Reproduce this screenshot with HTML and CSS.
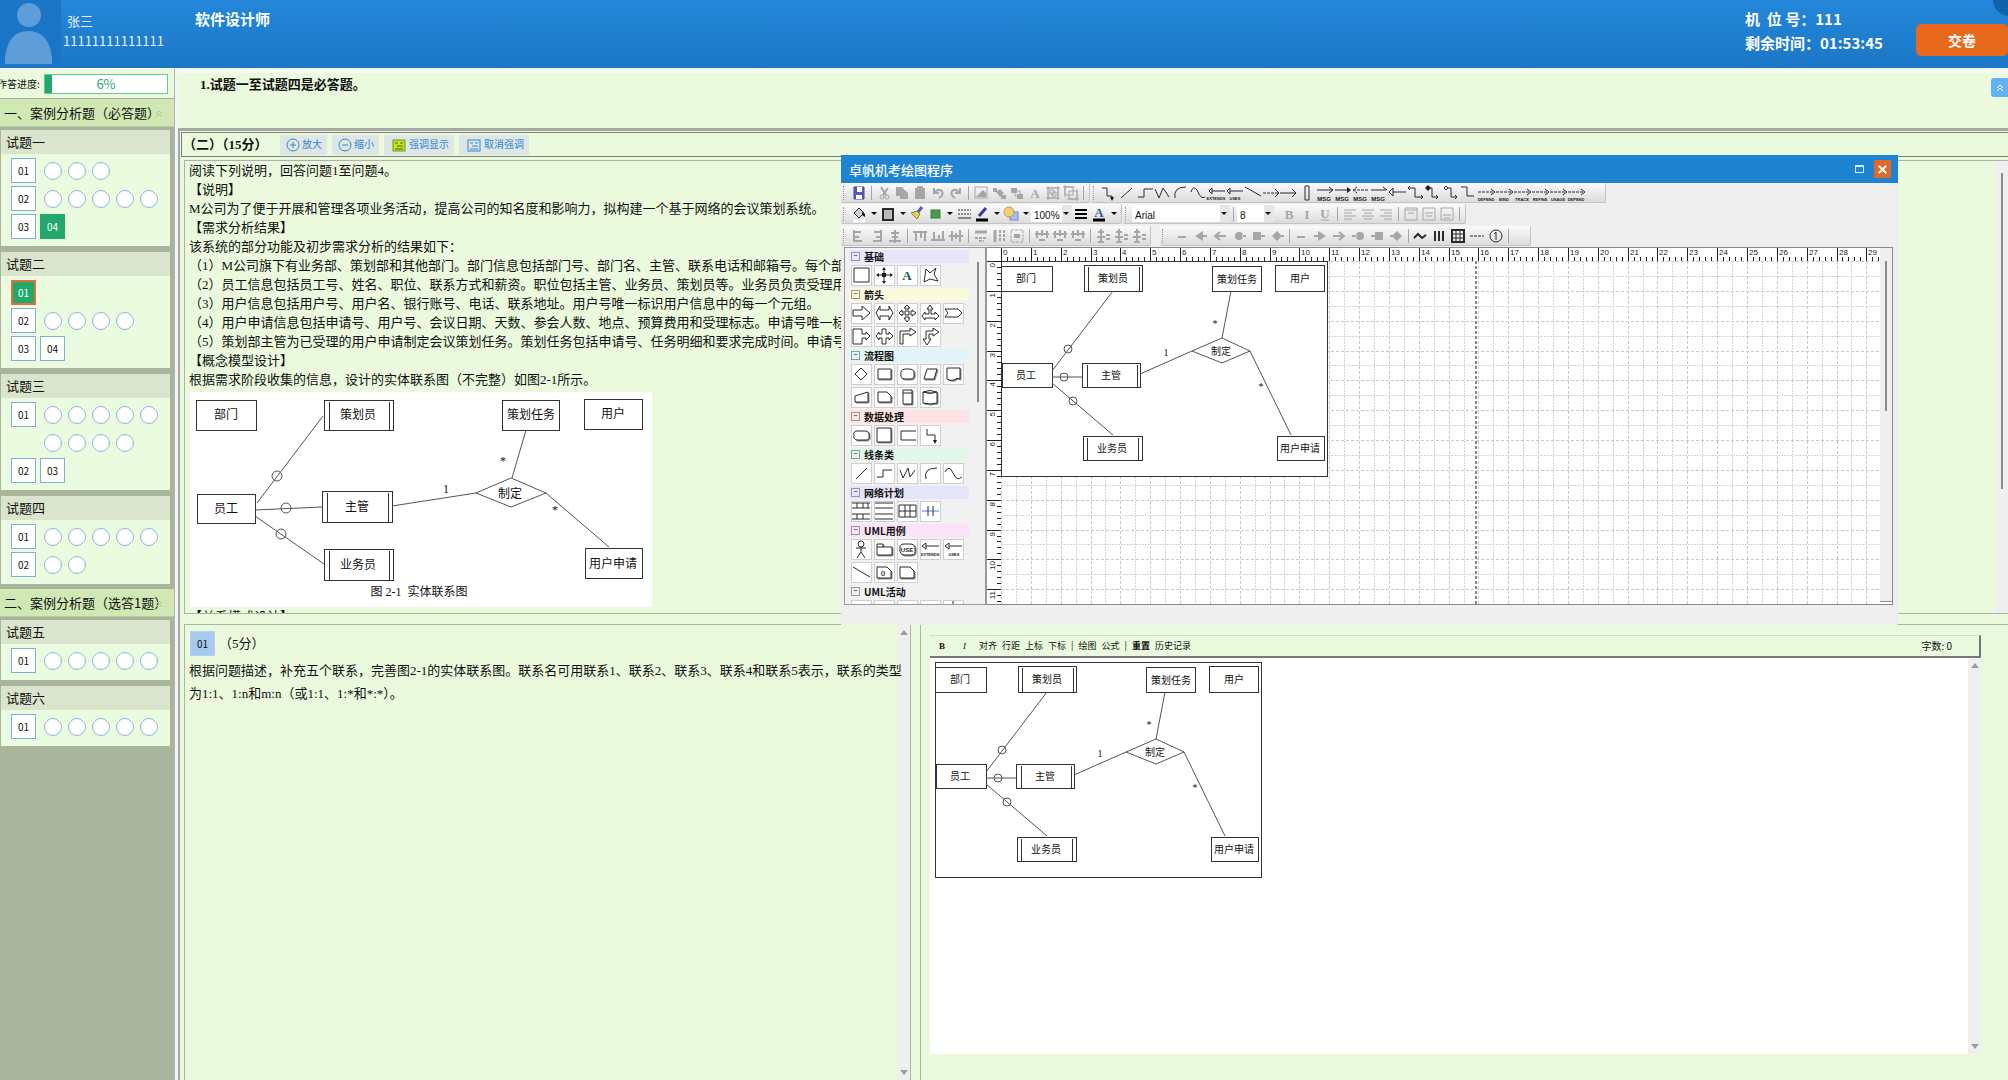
FILE: index.html
```html
<!DOCTYPE html>
<html lang="zh-CN">
<head>
<meta charset="utf-8">
<title>软件设计师</title>
<link rel="stylesheet" href="styles.css">
</head>
<body>
<header class="top">
  <svg class="avatar" viewBox="0 0 61 68" aria-hidden="true"><circle cx="29" cy="15" r="12"/><path d="M5 64V58Q8 31 28 31Q49 31 52 58V64Z"/></svg>
  <div class="who"><span>张三</span><span>11111111111111</span></div>
  <h1 class="exam">软件设计师</h1>
  <dl class="seat">
    <div><dt>机&nbsp; 位 号：</dt><dd>111</dd></div>
    <div><dt>剩余时间：</dt><dd>01:53:45</dd></div>
  </dl>
  <button class="submit" type="button">交卷</button>
  <span class="corner"></span>
</header>

<div class="shell">
<aside class="side">
  <div class="progress"><span class="progress-label">作答进度:</span><div class="bar"><i style="width:6%"></i><b>6%</b></div></div>
  <h2 class="part">一、案例分析题（必答题）<svg viewBox="0 0 8 8"><path d="M1 4L4 1L7 4M1 7L4 4L7 7"/></svg></h2>
  <section class="group"><h3>试题一</h3><div class="rows">
    <div class="row"><button>01</button><i class="first"></i><i></i><i></i></div>
    <div class="row"><button>02</button><i class="first"></i><i></i><i></i><i></i><i></i></div>
    <div class="row"><button>03</button><button class="done">04</button></div>
  </div></section>
  <section class="group"><h3>试题二</h3><div class="rows">
    <div class="row"><button class="done now">01</button></div>
    <div class="row"><button>02</button><i class="first"></i><i></i><i></i><i></i></div>
    <div class="row"><button>03</button><button>04</button></div>
  </div></section>
  <section class="group"><h3>试题三</h3><div class="rows">
    <div class="row"><button>01</button><i class="first"></i><i></i><i></i><i></i><i></i></div>
    <div class="row more"><i class="first"></i><i></i><i></i><i></i></div>
    <div class="row"><button>02</button><button>03</button></div>
  </div></section>
  <section class="group"><h3>试题四</h3><div class="rows">
    <div class="row"><button>01</button><i class="first"></i><i></i><i></i><i></i><i></i></div>
    <div class="row"><button>02</button><i class="first"></i><i></i></div>
  </div></section>
  <h2 class="part">二、案例分析题（选答1题）<svg viewBox="0 0 8 8"><path d="M1 4L4 1L7 4M1 7L4 4L7 7"/></svg></h2>
  <section class="group"><h3>试题五</h3><div class="rows">
    <div class="row"><button>01</button><i class="first"></i><i></i><i></i><i></i><i></i></div>
  </div></section>
  <section class="group"><h3>试题六</h3><div class="rows">
    <div class="row"><button>01</button><i class="first"></i><i></i><i></i><i></i><i></i></div>
  </div></section>
</aside>

<main class="work">
  <div class="notice"><p>1.试题一至试题四是必答题。</p>
    <button class="fold" type="button" aria-label="收起"><svg viewBox="0 0 8 8"><path d="M1 4L4 1L7 4M1 7L4 4L7 7"/></svg></button>
  </div>
  <div class="frame">
    <div class="qbar">
      <h2>（二）（15分）</h2>
      <button type="button"><svg viewBox="0 0 14 14"><circle cx="7" cy="7" r="6"/><path d="M4 7H10M7 4V10"/></svg>放大</button>
      <button type="button"><svg viewBox="0 0 14 14"><circle cx="7" cy="7" r="6"/><path d="M4 7H10"/></svg>缩小</button>
      <button type="button" class="wide"><svg viewBox="0 0 14 14"><rect x="1" y="2" width="12" height="11" fill="#c6e421" stroke="#6a9a1c"/><path d="M3 5H6M8 5H11M5 8H11M3 11H11" stroke="#3d6b1c"/></svg>强调显示</button>
      <button type="button" class="wide"><svg viewBox="0 0 14 14"><rect x="1" y="2" width="12" height="11"/><path d="M3 5H6M8 5H11M5 8H11M3 11H11"/></svg>取消强调</button>
    </div>
    <article class="statement">
      <div class="reading">
        <p>阅读下列说明，回答问题1至问题4。</p>
        <p>【说明】</p>
        <p>M公司为了便于开展和管理各项业务活动，提高公司的知名度和影响力，拟构建一个基于网络的会议策划系统。</p>
        <p>【需求分析结果】</p>
        <p>该系统的部分功能及初步需求分析的结果如下：</p>
        <p>（1）M公司旗下有业务部、策划部和其他部门。部门信息包括部门号、部门名、主管、联系电话和邮箱号。每个部门只</p>
        <p>（2）员工信息包括员工号、姓名、职位、联系方式和薪资。职位包括主管、业务员、策划员等。业务员负责受理用户</p>
        <p>（3）用户信息包括用户号、用户名、银行账号、电话、联系地址。用户号唯一标识用户信息中的每一个元组。</p>
        <p>（4）用户申请信息包括申请号、用户号、会议日期、天数、参会人数、地点、预算费用和受理标志。申请号唯一标识</p>
        <p>（5）策划部主管为已受理的用户申请制定会议策划任务。策划任务包括申请号、任务明细和要求完成时间。申请号唯</p>
        <p>【概念模型设计】</p>
        <p>根据需求阶段收集的信息，设计的实体联系图（不完整）如图2-1所示。</p>
        <svg class="er big" viewBox="0 0 462 215" width="462" height="215" role="img" aria-label="实体联系图">
          <g class="ink">
            <path d="M6 8H66V38H6ZM134 8H203V38H134ZM139 10V38M199 10V38M312 8H369V38H312ZM394 7H452V37H394ZM7 102H65V131H7ZM132 99H202V130H132ZM137 101V130M198 101V130M134 157H203V188H134ZM139 159V188M199 159V188M395 156H452V186H395Z"/>
            <path class="slant" d="M286 101L321 86L356 101L321 115ZM67 111L133 24M65 118L132 115M65 124L134 172M202 114L286 101M336 38L322 86M356 101L419 155"/>
            <circle cx="87" cy="84" r="5"/><circle cx="96" cy="116" r="5"/><circle cx="91" cy="142" r="5"/>
          </g>
          <text x="36" y="27">部门</text><text x="168" y="27">策划员</text><text x="341" y="27">策划任务</text><text x="423" y="26">用户</text>
          <text x="36" y="121">员工</text><text x="167" y="119">主管</text><text x="320" y="106">制定</text>
          <text x="168" y="177">业务员</text><text x="423" y="176">用户申请</text>
          <text x="256" y="101">1</text><text x="313" y="73">*</text><text x="365" y="122">*</text>
          <text x="229" y="204">图 2-1&nbsp; 实体联系图</text>
        </svg>
        <p>【关系模式设计】</p>
      </div>
      <div class="thinbar"><i></i></div>
    </article>
    <div class="answer">
      <section class="ask">
        <header><b>01</b><span>（5分）</span></header>
        <p>根据问题描述，补充五个联系，完善图2-1的实体联系图。联系名可用联系1、联系2、联系3、联系4和联系5表示，联系的类型</p><p>为1:1、1:n和m:n（或1:1、1:*和*:*）。</p>
        <div class="sb"><i class="up"></i><i class="down"></i></div>
      </section>
      <section class="reply">
        <div class="tools">
          <button type="button" class="t-b">B</button><button type="button" class="t-i">I</button>
          <button type="button">对齐</button><button type="button">行距</button><button type="button">上标</button><button type="button">下标</button><span>|</span>
          <button type="button">绘图</button><button type="button">公式</button><span>|</span>
          <button type="button" class="strong">重置</button><button type="button">历史记录</button>
          <output>字数: 0</output>
        </div>
        <div class="editor">
          <svg class="er small" viewBox="0 0 327 216" width="327" height="216" role="img" aria-label="作答图">
            <g class="ink">
              <path d="M0 0H326V215H0ZM0 5H51V30H0ZM83 4H141V30H83ZM87 6V30M138 6V30M211 5H260V30H211ZM274 4H323V30H274ZM1 102H51V126H1ZM81 102H139V126H81ZM86 104V126M136 104V126M82 175H141V199H82ZM86 177V199M137 177V199M276 175H323V199H276Z"/>
              <path class="slant" d="M191 90L221 77L249 90L221 102ZM51 110L112 30M51 116H81M51 122L112 174M139 113L191 90M230 30L221 77M249 90L290 174"/>
              <circle cx="67" cy="88" r="4"/><circle cx="63" cy="116" r="4"/><circle cx="72" cy="140" r="4"/>
            </g>
            <text x="25" y="21">部门</text><text x="112" y="21">策划员</text><text x="236" y="22">策划任务</text><text x="299" y="21">用户</text>
            <text x="25" y="118">员工</text><text x="110" y="118">主管</text><text x="220" y="94">制定</text>
            <text x="111" y="191">业务员</text><text x="299" y="191">用户申请</text>
            <text x="165" y="95">1</text><text x="214" y="66">*</text><text x="260" y="129">*</text>
          </svg>
          <div class="sb"><i class="up"></i><i class="down"></i></div>
        </div>
      </section>
    </div>
  </div>
</main>
</div>

<section class="win" aria-label="卓帆机考绘图程序">
  <header class="win-title"><h2>卓帆机考绘图程序</h2>
    <button type="button" class="max" aria-label="最大化"></button>
    <button type="button" class="close" aria-label="关闭"><svg viewBox="0 0 18 18"><path d="M5 5L13 13M13 5L5 13"/></svg></button>
  </header>
  <div class="bars">
    <div class="line"><div class="tbar" data-bar="edit"></div><div class="tbar tail" data-bar="link"></div></div>
    <div class="line">
      <div class="tbar"><span class="slot" data-bar="paint"></span><label class="pick zoom"><select aria-label="缩放"><option>100%</option></select></label><span class="slot" data-bar="weight"></span></div>
      <div class="tbar"><label class="pick face"><select aria-label="字体"><option>Arial</option></select></label><s></s><label class="pick size"><select aria-label="字号"><option>8</option></select></label><span class="slot plain" data-bar="text"></span></div>
    </div>
    <div class="line"><div class="tbar" data-bar="align"></div><div class="tbar loose tail" data-bar="ends"></div></div>
  </div>
  <div class="desk">
    <nav class="palette"><div class="shapes" id="shapes"></div><div class="thinbar"><i></i></div></nav>
    <div class="board">
      <svg class="rule-x" id="ruleX"></svg>
      <svg class="rule-y" id="ruleY"></svg>
      <div class="sheet">
        <svg class="grid" id="grid"></svg>
        <svg class="er small" viewBox="0 0 327 216" width="327" height="216" role="img" aria-label="绘图内容">
          <g class="ink">
            <path d="M0 0H326V215H0ZM0 5H51V30H0ZM83 4H141V30H83ZM87 6V30M138 6V30M211 5H260V30H211ZM274 4H323V30H274ZM1 102H51V126H1ZM81 102H139V126H81ZM86 104V126M136 104V126M82 175H141V199H82ZM86 177V199M137 177V199M276 175H323V199H276Z"/>
            <path class="slant" d="M191 90L221 77L249 90L221 102ZM51 110L112 30M51 116H81M51 122L112 174M139 113L191 90M230 30L221 77M249 90L290 174"/>
            <circle cx="67" cy="88" r="4"/><circle cx="63" cy="116" r="4"/><circle cx="72" cy="140" r="4"/>
          </g>
          <text x="25" y="21">部门</text><text x="112" y="21">策划员</text><text x="236" y="22">策划任务</text><text x="299" y="21">用户</text>
          <text x="25" y="118">员工</text><text x="110" y="118">主管</text><text x="220" y="94">制定</text>
          <text x="111" y="191">业务员</text><text x="299" y="191">用户申请</text>
          <text x="165" y="95">1</text><text x="214" y="66">*</text><text x="260" y="129">*</text>
        </svg>
      </div>
      <div class="thinbar"><i></i></div>
    </div>
  </div>
</section>
<script src="draw.js"></script>
</body>
</html>
```
FILE: styles.css
```css
* { box-sizing: border-box; }
body { margin: 0; height: 100vh; overflow: hidden; display: flex; flex-direction: column; position: relative; background: #ebfadd; color: #111; font: 13px/19px "Liberation Serif", "Noto Sans CJK SC", sans-serif; }
h1, h2, h3, p, dl, dd { margin: 0; font-size: inherit; font-weight: inherit; }
button, select { font: inherit; color: inherit; padding: 0; margin: 0; border: 0; background: none; }
svg { display: block; flex: none; }
i { font-style: normal; }

.top { flex: none; height: 68px; display: flex; align-items: flex-start; color: #fff; background: linear-gradient(#2487d9, #1b77c6); font-family: "Noto Sans CJK SC", sans-serif; position: relative; overflow: hidden; }
.avatar { width: 61px; height: 68px; background: #1a75c6; fill: #5f9dd8; }
.who { display: flex; flex-direction: column; width: 134px; padding: 11px 0 0 2px; line-height: 20px; color: #e4f1fc; }
.who span:first-child { padding-left: 4px; }
.exam { flex: 1; font-size: 15px; line-height: 20px; font-weight: bold; padding-top: 9px; }
.seat { padding-top: 7px; width: 171px; font-size: 15px; line-height: 24px; font-weight: bold; white-space: nowrap; }
.seat div { display: flex; }
.submit { width: 92px; height: 32px; margin-top: 24px; border-radius: 5px; background: #e9691c; font-size: 14px; font-weight: bold; cursor: pointer; }
.corner { position: absolute; right: -17px; top: -16px; width: 32px; height: 32px; border-radius: 50%; background: #1063ab; }

.shell { flex: 1; min-height: 0; display: flex; }
.side { width: 175px; flex: none; background: #a8b49b; border-right: 1px solid #b4b4b4; overflow: hidden; font-family: "Noto Sans CJK SC", sans-serif; }
.progress { height: 31px; display: flex; align-items: center; background: #ebfadd; border-bottom: 1px solid #a9a9a9; border-top: 1px solid #fff; padding-right: 6px; }
.progress-label { width: 44px; flex: none; font-size: 10px; white-space: nowrap; margin-left: -3px; }
.bar { flex: 1; margin-left: 3px; height: 20px; background: #fff; border: 1px solid #6cc39b; position: relative; text-align: center; line-height: 18px; }
.bar i { position: absolute; left: 0; top: 0; bottom: 0; background: #22a76c; }
.bar b { font-weight: normal; color: #2aa873; }
.part { height: 28px; margin-bottom: 3px; background: #d0e8b3; line-height: 28px; padding-left: 4px; position: relative; white-space: nowrap; border-bottom: 1px solid #b9caa4; }
.group + .part { margin-top: -1px; }
.part svg { position: absolute; right: 11px; top: 11px; width: 8px; height: 8px; }
.part path, .fold path { fill: none; stroke: #aebf98; }
.group { margin: 0 4px 6px 1px; background: #ebfbdf; }
.group h3 { height: 24px; line-height: 24px; padding-left: 5px; background: #dbe5cd; }
.rows { padding: 4px 0 7px 10px; display: grid; gap: 3px; }
.row { display: flex; align-items: center; height: 25px; gap: 4px; }
.row button { width: 25px; height: 25px; border: 1px solid #7fb0d2; background: #fff; font-size: 10px; line-height: 23px; cursor: pointer; }
.row i { width: 18px; height: 18px; border: 1px solid #8db7d6; border-radius: 50%; background: #fff; margin-right: 2px; flex: none; }
.row .first { margin-left: 4px; }
.row.more .first { margin-left: 33px; }
.row .done { background: #22a76c; border-color: #22a76c; color: #fff; }
.row .now { border: 2px solid #e2703a; line-height: 21px; }

.work { flex: 1; min-width: 0; display: flex; flex-direction: column; border-left: 3px solid #f4f4f4; }
.notice { flex: none; height: 60px; border-top: 5px solid #f7f9f5; display: flex; justify-content: space-between; font-weight: bold; }
.notice p { padding: 2px 0 0 22px; }
.fold { width: 17px; height: 19px; margin-top: 5px; background: #62b2f6; border-radius: 3px 0 0 3px; display: grid; place-items: center; }
.fold svg { width: 8px; height: 8px; }
.fold path { stroke: #fff; }
.frame { flex: 1; min-height: 0; display: flex; flex-direction: column; border: solid #a6a8a3; border-width: 3px 0 0 2px; }
.qbar { flex: none; height: 25px; display: flex; align-items: center; gap: 5px; margin: 1px 0 3px 1px; padding-left: 1px; border: solid #7c7f7a; border-width: 1px 0 1px 1px; }
.qbar h2 { font-weight: bold; width: 92px; white-space: nowrap; }
.qbar button { display: flex; align-items: center; gap: 2px; height: 20px; width: 47px; padding-left: 6px; background: #dfe6e6; color: #2f86d0; font-size: 10px; cursor: pointer; }
.qbar button.wide { width: 70px; padding-left: 8px; gap: 3px; }
.qbar svg { width: 14px; height: 14px; fill: none; stroke: #2f86d0; }
.statement { flex: 1 1 0; min-height: 0; margin-left: 4px; border: solid #a9b5ab; border-width: 1px 0 1px 1px; display: flex; overflow: hidden; }
.reading { flex: 1; min-width: 0; padding: 0 0 0 4px; overflow: hidden; white-space: nowrap; }
.thinbar { flex: none; width: 12px; background: #efefef; padding: 12px 5px 0; }
.thinbar i { display: block; width: 2px; height: 316px; background: #8b8b8b; }
.answer { flex: 1 1 4px; min-height: 0; display: grid; grid-template-columns: 727fr 1088fr; gap: 9px; margin: 10px 0 0 4px; }
.ask, .reply { min-width: 0; border: solid #a9b5ab; border-width: 1px 0 0 1px; position: relative; }
.ask { border-right-width: 1px; padding: 4px 0 0 4px; line-height: 23px; white-space: nowrap; z-index: 0; }
.ask header { display: flex; align-items: center; height: 29px; gap: 4px; margin-bottom: 1px; }
.ask b { width: 25px; height: 25px; background: #a7c8ef; border: 1px solid #b9d2ea; font: 10px/23px "Noto Sans CJK SC", sans-serif; text-align: center; margin-left: 1px; }
.sb { position: absolute; right: 0; top: 0; bottom: 0; width: 13px; background: #efefef; display: flex; flex-direction: column; justify-content: space-between; align-items: center; padding: 5px 0; }
.ask > .sb { z-index: -1; }
.sb i { border: 4px solid transparent; border-top-width: 0; border-bottom: 5px solid #9c9c9c; }
.sb .down { border-top: 5px solid #9c9c9c; border-bottom-width: 0; }
.reply { padding: 10px 27px 26px 9px; display: flex; flex-direction: column; background: #e9fade; }
.tools { flex: none; height: 23px; display: flex; align-items: center; gap: 5px; padding: 0 27px 0 9px; border: solid #777; border-width: 0 2px 2px 0; border-top: 1px solid #cfe0c6; font: 9px/12px "Noto Sans CJK SC", sans-serif; white-space: nowrap; }
.tools .t-b { width: 19px; text-align: left; font-family: "Liberation Serif", serif; font-weight: bold; }
.tools .t-i { width: 11px; text-align: left; font-family: "Liberation Serif", serif; font-style: italic; }
.tools .strong { font-weight: bold; }
.tools output { margin-left: auto; font-size: 10px; }
.editor { flex: 1; background: #fff; position: relative; padding: 4px 5px; }

.er .ink { fill: none; stroke: #333; shape-rendering: crispEdges; }
.er .slant, .er circle { shape-rendering: auto; stroke: #555; }
.er text { text-anchor: middle; fill: #111; font-family: "Liberation Serif", "Noto Sans CJK SC", sans-serif; }
.big { background: #fff; margin: 3px 0 0 1px; }
.big text { font-size: 12px; }
.small { overflow: visible; }
.small text { font-size: 10px; }

.win { position: absolute; left: 841px; right: 110px; top: 155px; height: 470px; background: #efefef; display: flex; flex-direction: column; }
.win-title { flex: none; height: 28px; display: flex; align-items: center; padding: 0 7px 0 8px; background: #1e84d2; color: #fff; font-family: "Noto Sans CJK SC", sans-serif; }
.win-title h2 { flex: 1; font-weight: 500; }
.max { width: 9px; height: 8px; border: 1px solid #d8ecfb; border-top-width: 2px; margin-right: 10px; }
.close { width: 17px; height: 18px; background: #e0682a; }
.close path { stroke: #fff; stroke-width: 2; }
.bars { flex: none; height: 64px; display: grid; grid-template-rows: 21px 22px 21px; }
.line { display: flex; gap: 1px; }
.tbar { display: flex; align-items: center; height: 20px; padding-right: 2px; background: linear-gradient(#fbfbfb, #dcdcdc); border: solid #c4c4c4; border-width: 0 1px 1px 0; border-radius: 2px; }
.tbar::before { content: ""; width: 3px; height: 14px; margin: 0 3px 0 2px; border-left: 1px dotted #999; }
.tbar.tail { padding-right: 19px; }
.tbar s { width: 1px; height: 14px; margin: 0 3px; background: #a5a5a5; }
.slot { display: flex; align-items: center; }
.slot.plain { padding-left: 6px; }
.tbar button { width: 18px; height: 18px; display: block; }
.tbar button svg { width: 18px; height: 18px; overflow: visible; }
.tbar.loose { margin-left: 8px; }
.tbar.loose::before { margin-right: 7px; }
.tbar.loose button { width: 19px; }
.tbar.loose s { margin: 0 2px; }
.tbar button.drop { width: 11px; }
.drop::before { content: ""; display: block; margin: 7px auto; width: 0; border: 3px solid transparent; border-top-color: #111; border-bottom: 0; }
.ico { fill: none; stroke: #2a2a2a; }
.ico.off { stroke: #a6a6a6; }
.ico .f { fill: #a6a6a6; stroke: none; }
.ico .k { fill: #1c1c1c; stroke: none; }
.ico .w { fill: #fff; }
.ico text { fill: #1c1c1c; stroke: none; font: bold 4px "Liberation Sans", sans-serif; text-anchor: middle; }
.ico text.m { font-size: 6px; }
.ico text.l { font: bold 13px "Liberation Serif", serif; }
.ico.off text { fill: #a6a6a6; }
.pick { position: relative; height: 17px; background: #fff; display: block; }
.pick::after { content: ""; position: absolute; right: 3px; top: 7px; border: 3px solid transparent; border-top-color: #111; border-bottom: 0; pointer-events: none; }
.pick select { width: 100%; height: 17px; appearance: none; padding-left: 3px; font: 10px/15px "Liberation Sans", sans-serif; outline: 0; }
.pick::before { content: ""; position: absolute; right: 0; top: 0; width: 10px; height: 17px; background: #e6e6e6; }
.zoom { width: 41px; }
.face { width: 98px; }
.size { width: 37px; }

.desk { flex: none; height: 358px; display: flex; margin-right: 5px; padding-left: 3px; }
.palette { width: 141px; flex: none; display: flex; justify-content: space-between; border: solid #9a9a9a; border-width: 1px 0 1px 1px; overflow: hidden; background: #f1f1f1; }
.shapes { width: 124px; padding: 2px 0 0 4px; }
.palette .thinbar { width: 10px; background: none; padding: 14px 2px 0; }
.palette .thinbar i { height: 140px; }
.shapes h3 { height: 13px; margin-bottom: 2px; font: bold 10px/13px "Noto Sans CJK SC", sans-serif; color: #111; display: flex; align-items: center; gap: 4px; padding-left: 2px; border-radius: 2px; }
.shapes h3::before { content: "−"; width: 7px; height: 7px; border: 1px solid #999; font-size: 7px; line-height: 5px; text-align: center; color: #555; }
.cells { display: flex; flex-wrap: wrap; gap: 2px; margin: 0 0 2px 2px; }
.cells button { width: 21px; height: 21px; background: #fff; border: 1px solid #cfcfcf; }
.cells svg { width: 19px; height: 19px; }
.shade { filter: drop-shadow(1px 1px 0 #8a8a8a); }
.board { flex: 1; min-width: 0; display: grid; grid-template-columns: 14px 1fr 12px; grid-template-rows: 13px 1fr; background: #fff; border: 1px solid #888; border-left: 2px solid #999; }
.rule-x { grid-area: 1 / 2; width: 100%; height: 13px; overflow: hidden; }
.rule-y { grid-area: 2 / 1; width: 14px; height: 100%; overflow: hidden; }
.rule-x path, .rule-y path { stroke: #222; shape-rendering: crispEdges; }
.rule-x text, .rule-y text { font: 8px "Liberation Sans", sans-serif; fill: #222; }
.sheet { grid-area: 2 / 2; position: relative; overflow: hidden; }
.sheet .er { position: relative; background: #fff; overflow: hidden; }
.grid { position: absolute; inset: 0; width: 100%; height: 100%; }
.grid path { stroke: #c9c9c9; stroke-dasharray: 3 2; shape-rendering: crispEdges; }
.grid .fine { stroke: #d4d4d4; stroke-dasharray: 2 1; }
.grid .page { stroke: #888; stroke-width: 2; stroke-dasharray: 3 2; }
.board .thinbar { grid-area: 1 / 3 / 3 / 4; padding-top: 13px; border-bottom: 1px solid #888; margin-bottom: 2px; }
.board .thinbar i { height: 150px; }
```
FILE: draw.js
```js
// Toolbar icons, 18 x 18 each. "|" is a separator, "v" a drop arrow.
const bars = {
  edit: [
    ['保存', '<path d="M4 3H14V15H4Z" fill="#5b57b5" stroke="#4a47a0"/><path d="M7 3H12V8H7ZM6 11H12V15H6Z" fill="#fff" stroke="none"/>'], '|',
    ['剪切', '<path d="M6 3L11 11M13 4L8 11" stroke-width="2"/><circle cx="7" cy="13" r="2"/><circle cx="12" cy="13" r="2"/>', 1],
    ['复制', '<path class="f" d="M3 3H9L11 5V6H12L15 9V15H7V12H3Z"/>', 1],
    ['粘贴', '<path class="f" d="M4 4H6V2H12V4H14V15H4Z"/>', 1],
    ['撤销', '<path d="M5 4V9H10M5 9Q9 4 13 7Q15 11 10 14" stroke-width="2"/>', 1],
    ['重做', '<path d="M13 4V9H8M13 9Q9 4 5 7Q3 11 8 14" stroke-width="2"/>', 1], '|',
    ['图片', '<rect x="3" y="3" width="12" height="11"/><path class="f" d="M4 13L11 6L14 9V13Z"/>', 1],
    ['置前', '<path class="f" d="M3 4H7V8H3ZM11 11H16V15H11ZM6 8L10 5L14 9L10 13Z"/>', 1],
    ['置后', '<path class="f" d="M3 4H9V9H3ZM9 10H15V15H9Z"/><path d="M7 7H12V12H7Z"/>', 1],
    ['文字', '<text class="l" x="9" y="14">A</text>', 1],
    ['组合', '<path d="M4 4H14V14H4ZM6 6H10V10H6ZM8 8H12V12H8ZM2 4H16M2 14H16M4 2V16M14 2V16"/>', 1],
    ['取消组合', '<path d="M3 3H11V11H3ZM7 7H15V15H7ZM1 3H13M5 15H17M3 1V13M15 5V17"/>', 1], '|'
  ],
  link: [
    ['连接线', '<path d="M2 4H7V12H12M12 12V16"/><path class="k" d="M10 13H14L12 17Z"/>'],
    ['直线', '<path d="M3 14L14 4"/>'], ['折线', '<path d="M2 13H8V5H17"/>'],
    ['多段线', '<path d="M1 5L5 14L9 4L15 13"/>'], ['弧线', '<path d="M3 14Q1 3 14 3"/>'],
    ['曲线', '<path d="M1 8Q3 1 7 6Q11 16 15 13"/>'],
    ['扩展', '<path d="M1 7L4 4V10ZM4 7H17"/><text x="8" y="16">EXTENDS</text>'],
    ['使用', '<path d="M1 7L4 4V10ZM4 7H17"/><text x="9" y="16">USES</text>'],
    ['关联', '<path d="M1 3L17 12"/>'], ['虚线箭头', '<path stroke-dasharray="3 1" d="M1 9H16"/><path d="M13 5L17 9L13 13"/>'],
    ['箭头', '<path d="M0 9H16M12 5L16 9L12 13"/>'], ['激活', '<path d="M7 2H11V16H7Z"/>'],
    ['消息', '<path d="M1 6H16M13 3L17 6L13 9"/><text class="m" x="8" y="17">MSG</text>'],
    ['同步消息', '<path d="M1 6H16"/><path class="k" d="M13 3L17 6L13 9Z"/><text class="m" x="8" y="17">MSG</text>'],
    ['返回消息', '<path stroke-dasharray="3 1" d="M1 6H17M5 3L1 6L5 9"/><text class="m" x="8" y="17">MSG</text>'],
    ['异步消息', '<path d="M1 6H16M13 3L17 6"/><text class="m" x="8" y="17">MSG</text>'],
    ['泛化', '<path d="M1 8L5 4V12ZM5 8H18"/>'], ['导航', '<path d="M2 4H9V13H17M4 2L2 4L4 6M15 11L17 13L15 15"/>'],
    ['组合关系', '<path class="k" d="M1 4L4 1L7 4L4 7Z"/><path d="M4 4H8V13H14M12 11L14 13L12 15"/>'],
    ['聚合关系', '<path d="M2 4L4 2L6 4L4 6ZM6 4H9V13H15M13 11L15 13L13 15"/>'],
    ['双折线', '<path d="M1 3H7V12H14"/>'],
    ...['DEPEND', 'BIND', 'TRACE', 'REFINE', 'USAGE', 'DEPEND'].map(n =>
      [n, `<path stroke-dasharray="3 1" d="M0 8H16"/><path d="M13 5L17 8L13 11"/><text x="8" y="17">${n}</text>`])
  ],
  paint: [
    ['填充', '<path d="M4 8L9 3L14 8L9 13Z" fill="#ccd"/><path class="k" d="M12 7L15 9V12L12 10Z"/><path d="M3 16H15" stroke="#fff" stroke-width="3"/>'], 'v',
    ['边框', '<rect x="4" y="4" width="10" height="11" fill="#bbb" stroke-width="2"/>'], 'v',
    ['画刷', '<path d="M3 8L9 14L12 9L9 6Z" fill="#e5cf61" stroke="#97832a"/><path d="M10 7L14 2" stroke="#5a5ab0" stroke-width="3"/>'],
    ['色块', '<rect x="5" y="5" width="9" height="8" fill="#4b9a4b" stroke="#3a803a"/>'], 'v',
    ['线型', '<path d="M3 5H16M3 9H16" stroke-dasharray="2 1"/><path d="M3 13H16"/>'],
    ['画笔', '<path d="M6 11L13 3" stroke="#3b3ba0" stroke-width="3"/><path d="M3 15H15" stroke="#000" stroke-width="3"/>'], 'v',
    ['图形', '<rect x="8" y="7" width="8" height="8" fill="#a9c0ee" stroke="#6c8bcb"/><circle cx="7" cy="7" r="5" fill="#f3cf7d" stroke="#c99a3a"/>'], 'v'
  ],
  weight: [
    ['线宽', '<path d="M3 5H15M3 9H15M3 13H15" stroke="#000" stroke-width="2"/>'],
    ['字体颜色', '<text class="l" x="9" y="12" style="fill:#3a5a94">A</text><path d="M3 15H15" stroke="#000" stroke-width="3"/>'], 'v'
  ],
  text: [
    ['加粗', '<text class="l" x="9" y="14">B</text>', 1], ['倾斜', '<text class="l" x="9" y="14" font-style="italic">I</text>', 1],
    ['下划线', '<text class="l" x="9" y="13">U</text><path d="M5 15H13"/>', 1], '|',
    ['左对齐', '<path d="M3 5H15M3 8H11M3 11H15M3 14H11"/>', 1], ['居中', '<path d="M3 5H15M5 8H13M3 11H15M5 14H13"/>', 1],
    ['右对齐', '<path d="M3 5H15M7 8H15M3 11H15M7 14H15"/>', 1], '|',
    ['顶部', '<path d="M3 3H15V15H3ZM3 5H15M6 8H12"/>', 1], ['中部', '<path d="M3 3H15V15H3ZM5 8H13M6 11H12"/>', 1],
    ['底部', '<path d="M3 3H15V15H3ZM5 10H13M6 13H12"/>', 1], '|'
  ],
  align: [
    ['左', '<path stroke-width="2" d="M4 3V15M4 5H11M4 10H9M4 14H12"/>', 1], ['右', '<path stroke-width="2" d="M13 3V15M6 5H13M8 10H13M5 14H13"/>', 1],
    ['中', '<path stroke-width="2" d="M9 3V16M5 6H13M6 10H12M3 14H15"/>', 1], '|',
    ['顶', '<path stroke-width="2" d="M2 5H16M5 5V14M10 5V11M14 5V14"/>', 1], ['底', '<path stroke-width="2" d="M2 13H16M5 5V13M10 8V13M14 4V13"/>', 1],
    ['中线', '<path stroke-width="2" d="M2 9H16M5 4V14M9 6V12M13 3V15"/>', 1], '|',
    ['等宽', '<path stroke-width="3" d="M3 5H15"/><path d="M3 11H15M7 14H12" stroke-width="2" stroke-dasharray="3 1"/>', 1],
    ['等高', '<path stroke-width="3" d="M5 3V15"/><path d="M10 3V15M14 3V15" stroke-width="2" stroke-dasharray="3 1"/>', 1],
    ['等大', '<path stroke-dasharray="3 1" d="M3 3H15V15H3Z"/><path class="f" d="M6 7H12V11H6Z"/>', 1], '|',
    ...['横距', '横距增', '横距减'].map(n => [n, '<path stroke-width="2" d="M2 7H16M4 4V11M9 3V9M14 4V11M6 13H12"/>', 1]), '|',
    ...['纵距', '纵距增', '纵距减'].map(n => [n, '<path stroke-width="2" d="M7 2V16M4 5H10M3 10H11M4 15H10M12 8H16M12 12H16"/>', 1])
  ],
  ends: [
    ['无', '<path stroke-width="2" d="M5 10H13"/>', 1], ['实心左', '<path class="f" d="M3 9L11 4V14ZM11 8H15V10H11Z"/>', 1],
    ['左', '<path stroke-width="2" d="M4 9H15M9 5L4 9L9 13"/>', 1], ['圆左', '<path class="f" d="M9 5A4 4 0 1 0 9 13A4 4 0 1 0 9 5M12 8H16V10H12Z"/>', 1],
    ['方左', '<path class="f" d="M4 5H12V13H4ZM12 8H16V10H12Z"/>', 1], ['菱左', '<path class="f" d="M4 9L9 4L14 9L9 14ZM12 8H16V10H12Z"/>', 1], '|',
    ['无端', '<path stroke-width="2" d="M5 10H13"/>', 1], ['实心右', '<path class="f" d="M15 9L7 4V14ZM3 8H7V10H3Z"/>', 1],
    ['右', '<path stroke-width="2" d="M3 9H14M9 5L14 9L9 13"/>', 1], ['圆右', '<path class="f" d="M11 5A4 4 0 1 0 11 13A4 4 0 1 0 11 5M3 8H8V10H3Z"/>', 1],
    ['方右', '<path class="f" d="M7 5H15V13H7ZM3 8H7V10H3Z"/>', 1], ['菱右', '<path class="f" d="M5 9L10 4L15 9L10 14ZM3 8H7V10H3Z"/>', 1], '|',
    ['折', '<path stroke-width="2" d="M3 11L7 7L11 11L15 8"/>'], ['竖线', '<path d="M5 4V14M9 4V14M13 4V14" stroke-width="2"/>'],
    ['网格', '<path stroke-width="2" d="M3 3H15V15H3Z"/><path d="M7 3V15M11 3V15M3 7H15M3 11H15"/>'],
    ['虚线', '<path stroke-dasharray="3 1" d="M2 9H16"/>'],
    ['序号', '<circle cx="9" cy="9" r="6"/><path d="M7 7L9 5V13"/>'], '|'
  ]
};
const svg = (size, body, off) => `<svg class="ico${off ? ' off' : ''}" viewBox="0 0 ${size} ${size}">${body}</svg>`;
document.querySelectorAll('[data-bar]').forEach(el => {
  el.innerHTML = bars[el.dataset.bar].map(b =>
    b === '|' ? '<s></s>' :
    b === 'v' ? '<button type="button" class="drop" aria-label="更多"></button>' :
    `<button type="button" aria-label="${b[0]}">${svg(18, b[1], b[2])}</button>`).join('');
});

// Shape palette, 19 x 19 each.
const sh = d => `<path class="shade w" d="${d}"/>`;
const ln = d => `<path d="${d}"/>`;
const shapes = [
  ['基础', '#e6e5fb', [ln('M2 2H17V16H2Z'), ln('M3 9H16M9 3V16') + '<path class="k" d="M7 7H11V11H7ZM9 1L11 4H7ZM9 18L11 15H7ZM1 9L4 7V11ZM18 9L15 7V11Z"/>', '<text class="l" x="9" y="14" style="fill:#0c5c50">A</text>', ln('M3 16L5 3L9 7L15 2L13 8L17 15L9 13Z')]],
  ['箭头', '#fafadc', [ln('M1 6H10V2L18 9L10 16V12H1Z'), ln('M1 9L5 2V6H14V2L18 9L14 16V12H5V16Z'), ln('M9 1L12 4H10V8H14V6L18 9L14 12V10H10V14H12L9 18L6 14H8V10H4V12L1 9L4 6V8H8V4H6Z'), ln('M9 1L12 5H10V10H14V8L18 12L14 16V14H4V16L1 12L4 8V10H8V5H6Z'), ln('M1 5H14L18 9L14 13H1L4 9Z'),
    ln('M1 2H10V7H14V5L18 9L14 13V11H10V17H1Z'), ln('M7 2H11V7H14V5L18 9L14 13V11H11V17H7V11H4V13L1 9L4 5V7H7Z'), ln('M2 17V4H12V1L18 5L12 9V7H5V17Z'), ln('M5 12V4H12V1L18 5L12 9V7H8V12H10L6 18L2 12Z')]],
  ['流程图', '#dff5f8', [ln('M3 9L9 3L15 9L9 15Z'), sh('M3 4H16V14H3Z'), sh('M7 4H12Q17 5 16 9Q17 14 12 14H7Q2 14 3 9Q2 5 7 4Z'), sh('M6 4H16L13 14H3Z'), sh('M3 3H16V14Q13 12 10 15Q6 16 3 14Z'),
    sh('M3 8L16 4V14H3Z'), sh('M3 4H12L16 8V14H3Z'), sh('M5 2H14V16H5ZM5 5H14'), sh('M2 4Q9 1 16 4V15Q9 17 2 15ZM2 4Q9 7 16 4')]],
  ['数据处理', '#fde3e3', [sh('M5 5H14Q18 6 17 9Q18 14 14 14H5Q1 13 2 9Q1 5 5 5Z'), sh('M2 2H16V16H2Z'), ln('M18 5H3V14H18'), ln('M6 3V9H14V16') + '<path class="k" d="M12 14H16L14 18Z"/>']],
  ['线条类', '#e2f7ea', [ln('M4 15L15 4'), ln('M2 13H8V6H17'), ln('M2 6L5 14L10 4L12 13L17 6'), ln('M5 15Q2 4 16 4'), ln('M1 8Q5 0 9 9Q13 18 18 13')]],
  ['网络计划', '#e4e4fb', [ln('M0 1H18M0 6H18M0 12H18M0 17H18M5 1V6M11 1V6M16 1V6M5 12V17M11 12V17'), ln('M0 1H18M0 6H18M0 12H18M0 17H18'), ln('M1 3H18V15H1ZM1 9H18M7 3V15M12 3V15'), '<path d="M1 9H18" stroke="#4f80e0"/>' + ln('M7 4V14M12 4V14')]],
  ['UML用例', '#fbe2f8', ['<circle cx="9" cy="4" r="3"/>' + ln('M9 7V12M4 8H14M9 12L5 18M9 12L13 18'), sh('M2 4H8V7H17V15H2ZM2 7H8'), sh('M6 4H13Q18 5 17 9Q18 15 13 15H6Q1 14 2 9Q1 4 6 4Z') + '<text class="m" x="9" y="12">USE</text>', ln('M1 6L5 3V9ZM5 6H18') + '<text x="9" y="16">EXTENDS</text>', ln('M1 6L5 3V9ZM5 6H18') + '<text x="10" y="16">USES</text>',
    ln('M1 4L18 14'), sh('M2 4H12L16 8V15H2Z') + '<text class="m" x="8" y="12">{}</text>', sh('M2 4H12L16 8V15H2Z')]],
  ['UML活动', '#f1f1f1', ['', '', '', '', ln('M9 0V8')]]
];
document.getElementById('shapes').innerHTML = shapes.map(([name, tint, list]) =>
  `<h3 style="background:${tint}">${name}</h3><div class="cells">` +
  list.map(s => `<button type="button" aria-label="${name}">${svg(19, s)}</button>`).join('') + '</div>').join('');

// Rulers and the drawing grid: one unit is just under 30 pixels.
// Only the units that fall inside the board are drawn.
const unit = 29.84, at = n => Math.round(n * unit);
const ruleX = document.getElementById('ruleX'), ruleY = document.getElementById('ruleY');
function drawRulers() {
  const w = ruleX.clientWidth || 880, h = ruleY.clientHeight || 342;
  let rx = '', ry = '', tx = '', ty = '', main = '', fine = '';
  for (let n = 0; at(n) < w; n++) {
    rx += `M${at(n)} 0V13`;
    for (let k = 1; k < 5; k++) rx += `M${at(n + k / 5)} 9V13`;
    if (at(n) + 12 < w) tx += `<text x="${at(n) + 2}" y="7">${n}</text>`;
    main += `M${at(n)} 0V${h}`;
    fine += `M${at(n + 0.5)} 0V${h}`;
  }
  for (let n = 0; at(n) < h; n++) {
    ry += `M0 ${at(n)}H14`;
    for (let k = 1; k < 5; k++) ry += `M10 ${at(n + k / 5)}H14`;
    if (at(n) + 11 < h) ty += `<text text-anchor="end" transform="translate(8 ${at(n) + 2}) rotate(-90)">${n}</text>`;
    main += `M0 ${at(n)}H${w}`;
    fine += `M0 ${at(n + 0.5)}H${w}`;
  }
  ruleX.innerHTML = `<path d="${rx}"/>${tx}`;
  ruleY.innerHTML = `<path d="${ry}"/>${ty}`;
  document.getElementById('grid').innerHTML = `<path d="${main}"/><path class="fine" d="${fine}"/><path class="page" d="M475 0V${h}"/>`;
}
drawRulers();
addEventListener('resize', drawRulers);
```
